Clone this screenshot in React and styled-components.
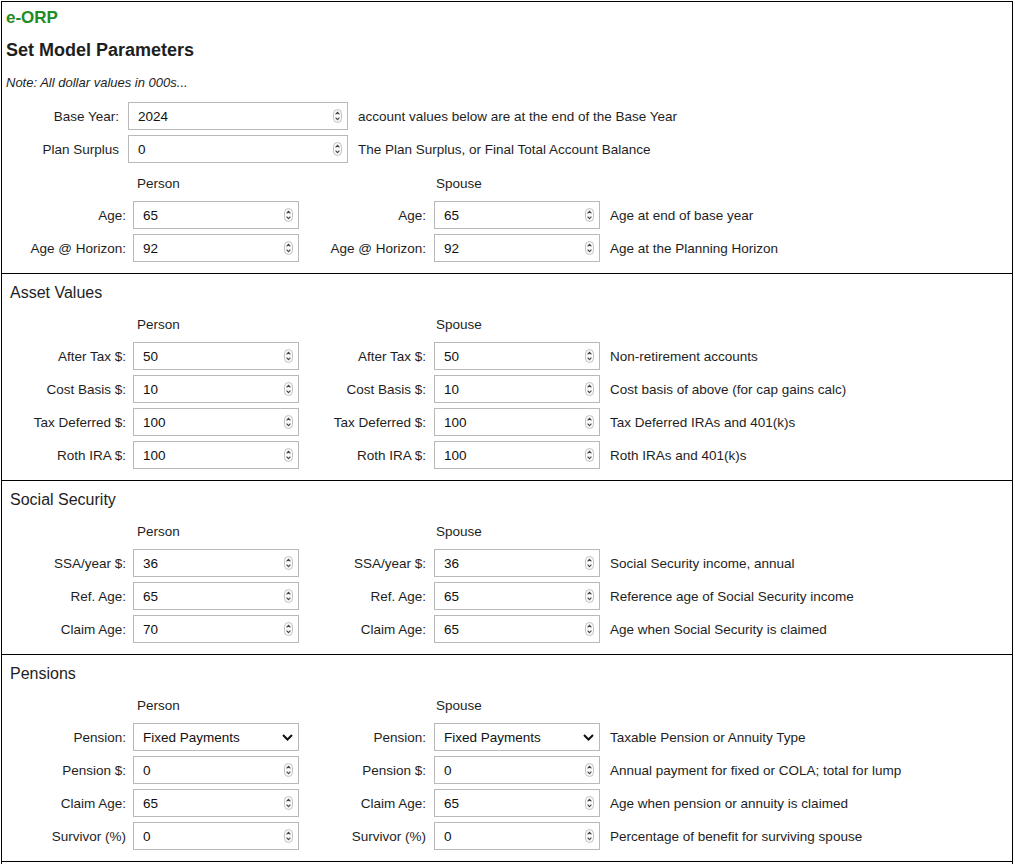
import React from 'react'
import styled, { createGlobalStyle } from 'styled-components'

const GlobalStyle = createGlobalStyle`
  body {
    margin: 0;
    background: #fff;
    font-family: "Liberation Sans", Arial, sans-serif;
    color: #222;
  }
`

const topRows = [
  { label: 'Base Year:', value: '2024', desc: 'account values below are at the end of the Base Year' },
  { label: 'Plan Surplus', value: '0', desc: 'The Plan Surplus, or Final Total Account Balance' },
]

const ageRows = [
  { label: 'Age:', a: '65', b: '65', desc: 'Age at end of base year' },
  { label: 'Age @ Horizon:', a: '92', b: '92', desc: 'Age at the Planning Horizon' },
]

const sections = [
  {
    title: 'Asset Values',
    rows: [
      { label: 'After Tax $:', a: '50', b: '50', desc: 'Non-retirement accounts' },
      { label: 'Cost Basis $:', a: '10', b: '10', desc: 'Cost basis of above (for cap gains calc)' },
      { label: 'Tax Deferred $:', a: '100', b: '100', desc: 'Tax Deferred IRAs and 401(k)s' },
      { label: 'Roth IRA $:', a: '100', b: '100', desc: 'Roth IRAs and 401(k)s' },
    ],
  },
  {
    title: 'Social Security',
    rows: [
      { label: 'SSA/year $:', a: '36', b: '36', desc: 'Social Security income, annual' },
      { label: 'Ref. Age:', a: '65', b: '65', desc: 'Reference age of Social Security income' },
      { label: 'Claim Age:', a: '70', b: '65', desc: 'Age when Social Security is claimed' },
    ],
  },
  {
    title: 'Pensions',
    rows: [
      { label: 'Pension:', a: 'Fixed Payments', b: 'Fixed Payments', desc: 'Taxable Pension or Annuity Type', select: true },
      { label: 'Pension $:', a: '0', b: '0', desc: 'Annual payment for fixed or COLA; total for lump' },
      { label: 'Claim Age:', a: '65', b: '65', desc: 'Age when pension or annuity is claimed' },
      { label: 'Survivor (%)', a: '0', b: '0', desc: 'Percentage of benefit for surviving spouse' },
    ],
  },
]

function Spinner() {
  return (
    <svg width="9" height="14" viewBox="0 0 9 14">
      <rect x="0.5" y="0.5" width="8" height="13" rx="4" fill="#fafafa" stroke="#c2c2c2" />
      <path d="M2.6 5.3 L4.5 3.4 L6.4 5.3" fill="none" stroke="#444" strokeWidth="1.1" />
      <path d="M2.6 8.7 L4.5 10.6 L6.4 8.7" fill="none" stroke="#444" strokeWidth="1.1" />
    </svg>
  )
}

function Chevron() {
  return (
    <svg width="11" height="7" viewBox="0 0 11 7">
      <path d="M1 1 L5.5 5.5 L10 1" fill="none" stroke="#111" strokeWidth="2" />
    </svg>
  )
}

function NumberField({ value, width }) {
  return (
    <Field $w={width}>
      <FieldInput defaultValue={value} />
      <Spinner />
    </Field>
  )
}

function SelectField({ value }) {
  return (
    <Field $w={166}>
      <FieldText>{value}</FieldText>
      <Chevron />
    </Field>
  )
}

function PairRow({ row }) {
  return (
    <Row>
      <Label $w={124} $gap={7}>{row.label}</Label>
      {row.select ? <SelectField value={row.a} /> : <NumberField value={row.a} width={166} />}
      <Label $w={127} $gap={8}>{row.label}</Label>
      {row.select ? <SelectField value={row.b} /> : <NumberField value={row.b} width={166} />}
      <Desc>{row.desc}</Desc>
    </Row>
  )
}

function ColumnHeads({ mt = 14 }) {
  return (
    <HeadRow $mt={mt}>
      <HeadCell $ml={131} $pl={4}>Person</HeadCell>
      <HeadCell $ml={135} $pl={2}>Spouse</HeadCell>
    </HeadRow>
  )
}

export default function App() {
  return (
    <>
      <GlobalStyle />
      <Page>
        <Section>
          <Brand>e-ORP</Brand>
          <MainTitle>Set Model Parameters</MainTitle>
          <Note>Note: All dollar values in 000s...</Note>
          <Rows $mt={11}>
            {topRows.map((r) => (
              <Row key={r.label}>
                <Label $w={117} $gap={9}>{r.label}</Label>
                <NumberField value={r.value} width={220} />
                <Desc>{r.desc}</Desc>
              </Row>
            ))}
          </Rows>
          <ColumnHeads mt={13} />
          <Rows>
            {ageRows.map((r) => (
              <PairRow key={r.label} row={r} />
            ))}
          </Rows>
        </Section>
        {sections.map((s) => (
          <Section key={s.title} $divided>
            <SectionTitle>{s.title}</SectionTitle>
            <ColumnHeads />
            <Rows>
              {s.rows.map((r) => (
                <PairRow key={r.label} row={r} />
              ))}
            </Rows>
          </Section>
        ))}
        <Section $divided $tail />
      </Page>
    </>
  )
}

const Page = styled.div`
  box-sizing: border-box;
  width: 1012px;
  margin: 1px 0 0 1px;
  border: 1px solid #000;
  border-bottom: none;
`

const Section = styled.section`
  border-top: ${(p) => (p.$divided ? '1px solid #000' : 'none')};
  padding-bottom: 11px;
  min-height: ${(p) => (p.$tail ? '40px' : '0')};
`

const Brand = styled.div`
  margin: 6px 0 0 4px;
  font-size: 17px;
  line-height: 20px;
  font-weight: 700;
  color: #228b22;
`

const MainTitle = styled.h2`
  margin: 11px 0 0 4px;
  font-size: 18px;
  line-height: 22px;
  font-weight: 700;
  color: #1e1e1e;
`

const Note = styled.div`
  margin: 14px 0 0 4px;
  font-size: 13px;
  line-height: 16px;
  font-style: italic;
  color: #1e1e1e;
`

const SectionTitle = styled.h3`
  margin: 9px 0 0 8px;
  font-size: 16px;
  line-height: 20px;
  font-weight: 400;
  color: #1e1e1e;
`

const Rows = styled.div`
  display: flex;
  flex-direction: column;
  gap: 5px;
  margin-top: ${(p) => p.$mt ?? 9}px;
`

const Row = styled.div`
  display: flex;
  align-items: center;
  height: 28px;
  font-size: 13.5px;
`

const Label = styled.label`
  flex-shrink: 0;
  box-sizing: border-box;
  width: ${(p) => p.$w}px;
  margin-right: ${(p) => p.$gap}px;
  text-align: right;
  white-space: nowrap;
  color: #1e1e1e;
`

const Field = styled.div`
  flex-shrink: 0;
  box-sizing: border-box;
  display: flex;
  align-items: center;
  width: ${(p) => p.$w}px;
  height: 28px;
  padding: 0 5px 0 9px;
  border: 1px solid #b9b9b9;
  background: #fff;
`

const FieldInput = styled.input`
  flex: 1;
  min-width: 0;
  border: none;
  outline: none;
  padding: 0;
  background: transparent;
  font-family: "Liberation Sans", Arial, sans-serif;
  font-size: 13.5px;
  color: #111;
`

const FieldText = styled.span`
  flex: 1;
  font-size: 13.5px;
  color: #111;
`

const Desc = styled.span`
  margin-left: 10px;
  white-space: nowrap;
  color: #1e1e1e;
`

const HeadRow = styled.div`
  display: flex;
  margin-top: ${(p) => p.$mt}px;
  font-size: 13.5px;
  line-height: 16px;
  color: #1e1e1e;
`

const HeadCell = styled.div`
  box-sizing: border-box;
  width: 166px;
  margin-left: ${(p) => p.$ml}px;
  padding-left: ${(p) => p.$pl}px;
`
